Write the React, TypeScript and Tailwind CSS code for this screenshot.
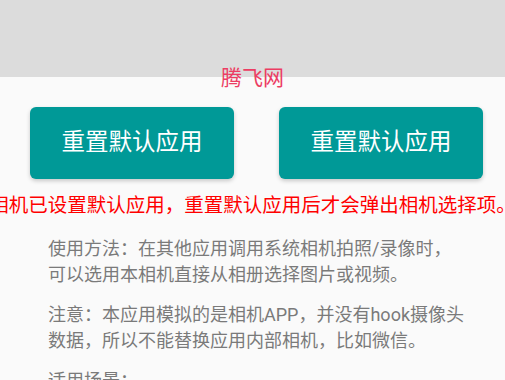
import React from 'react';

const tips = [
  ['使用方法：在其他应用调用系统相机拍照/录像时，', '可以选用本相机直接从相册选择图片或视频。'],
  ['注意：本应用模拟的是相机APP，并没有hook摄像头', '数据，所以不能替换应用内部相机，比如微信。'],
  ['适用场景：', ''],
];

function ResetButton() {
  return (
    <button className="flex h-[72px] w-[204px] items-center justify-center rounded-[6px] bg-[#009997] text-[23.5px] text-white shadow-[0_2px_4px_rgba(0,0,0,0.2)]">
      重置默认应用
    </button>
  );
}

export default function App() {
  return (
    <div className="relative h-[380px] w-[505px] overflow-hidden bg-[#fafafa] font-['Roboto','Noto_Sans_CJK_SC',sans-serif]">
      <div className="h-[77px] bg-[#dcdcdc]" />

      <div className="absolute left-0 right-0 top-[64px] flex justify-center text-[21px] leading-[28px] text-[#ec3d63]">
        腾飞网
      </div>

      <section className="mt-[30px] flex gap-[45px] pl-[30px]">
        <ResetButton />
        <ResetButton />
      </section>

      <div className="mt-[14px] flex justify-center whitespace-nowrap text-[19.5px] leading-[26px] text-[#ff0000]">
        相机已设置默认应用，重置默认应用后才会弹出相机选择项。
      </div>

      <div className="mt-[17px] flex flex-col gap-[14px] pl-[48px] text-[18px] leading-[26px] text-[#7a7a7a]">
        {tips.map(([a, b], i) => (
          <p key={i} className="whitespace-nowrap">
            {a}
            {b && <br />}
            {b}
          </p>
        ))}
      </div>
    </div>
  );
}
